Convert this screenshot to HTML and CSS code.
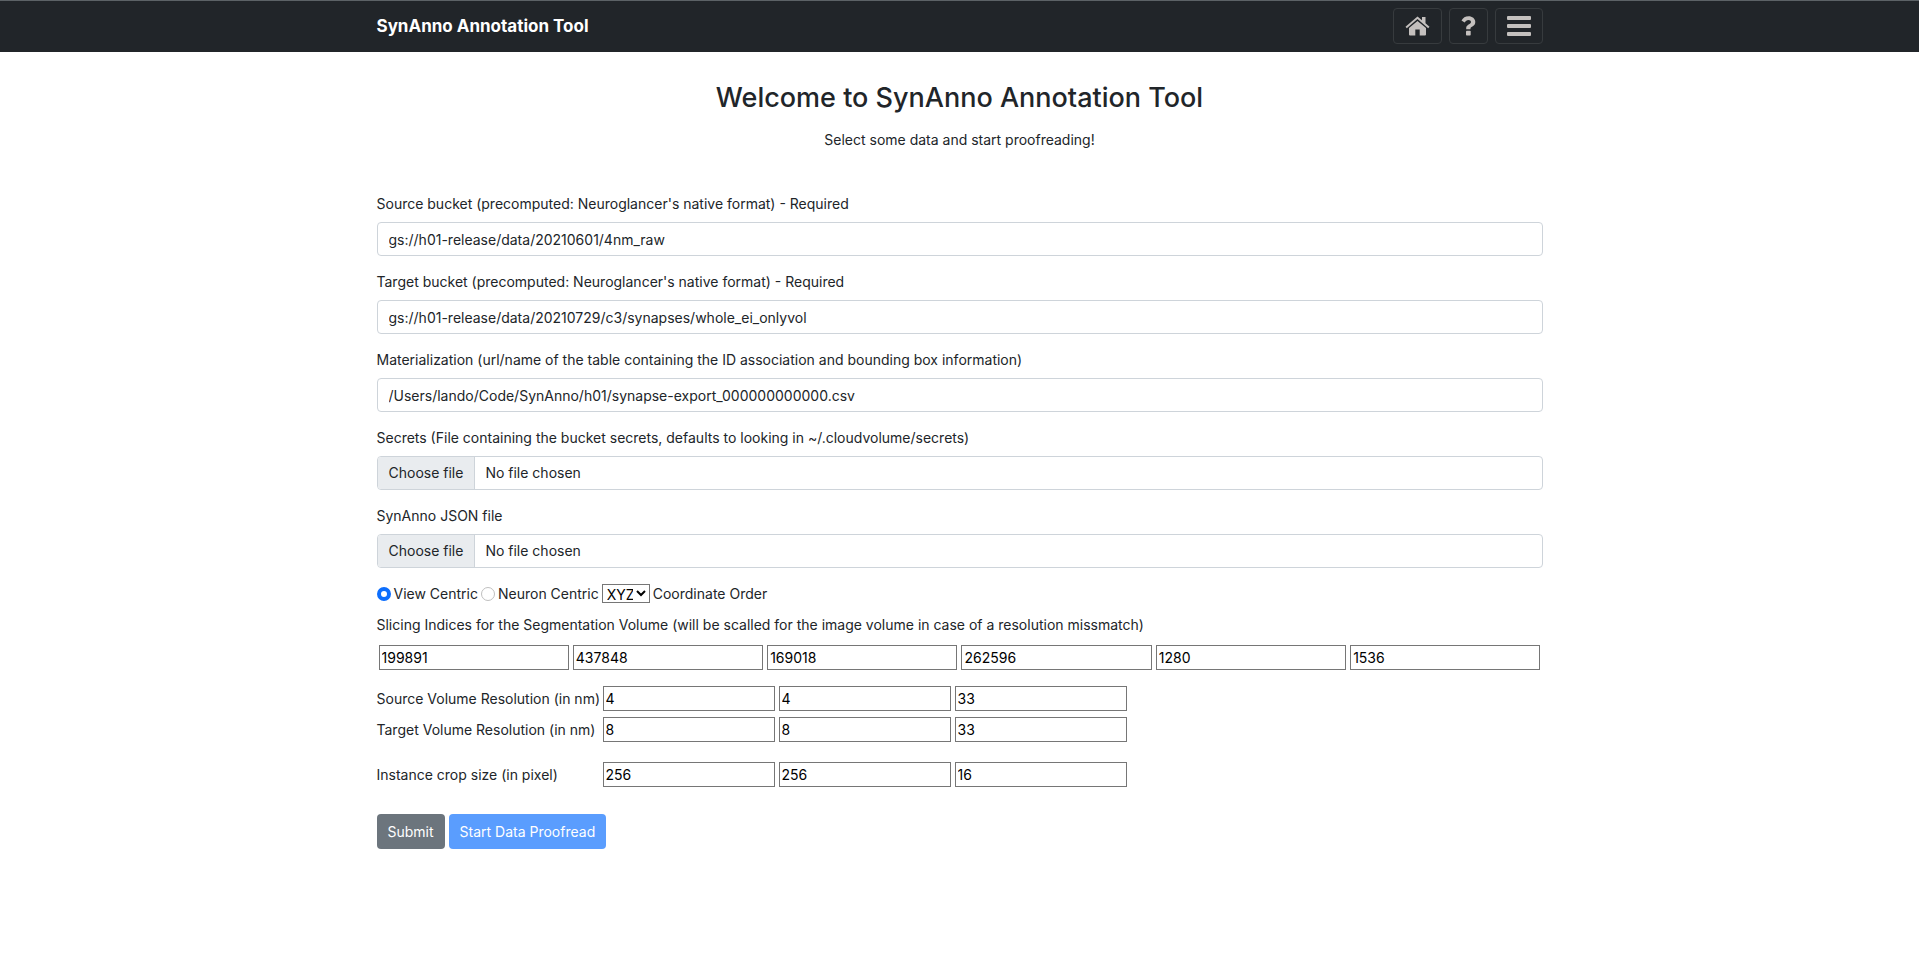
FILE: index.html
```html
<!DOCTYPE html>
<html lang="en">
<head>
<meta charset="utf-8">
<meta name="viewport" content="width=device-width, initial-scale=1">
<title>SynAnno Annotation Tool</title>
<link rel="stylesheet" href="styles.css">
</head>
<body>
<header class="navbar">
  <div class="container navbar-inner">
    <a class="brand" href="#">SynAnno Annotation Tool</a>
    <nav class="nav-buttons">
      <button class="nav-btn" type="button" aria-label="Home">
        <svg width="25" height="20" viewBox="0 0 25 20" fill="currentColor" aria-hidden="true">
          <path d="M12.500 0.500 L17 4.300 V1 H20.500 V7.300 L24.500 10.700 L23.200 12.200 L12.500 3.100 L1.800 12.200 L0.500 10.700 Z"/>
          <path d="M12.500 4.900 L21 12.100 V18.500 Q21 19.500 20 19.500 H14.700 V13.500 H10.300 V19.500 H5 Q4 19.500 4 18.500 V12.100 Z"/>
        </svg>
      </button>
      <button class="nav-btn" type="button" aria-label="Help">
        <svg width="15" height="20" viewBox="0 0 15 20" fill="currentColor" aria-hidden="true">
          <path d="M0.500 4.500 C2 1.700 4.300 0.200 7.600 0.200 C11.200 0.200 14.300 2.500 14.300 6 C14.300 10.500 9.500 10.600 9.500 12.300 V13.200 H5.200 V12 C5.200 8.300 10 8.200 10 5.900 C10 4.600 8.900 3.900 7.500 3.900 C5.700 3.900 4.800 4.900 3.600 6.500 Z"/>
          <rect x="5" y="14.700" width="4.700" height="4.800" rx="0.800"/>
        </svg>
      </button>
      <button class="nav-btn" type="button" aria-label="Menu">
        <svg width="24" height="20" viewBox="0 0 24 20" fill="currentColor" aria-hidden="true">
          <rect x="0" y="0" width="24" height="4" rx="1"/>
          <rect x="0" y="8" width="24" height="4" rx="1"/>
          <rect x="0" y="16" width="24" height="4" rx="1"/>
        </svg>
      </button>
    </nav>
  </div>
</header>
<main class="container">
  <h1 class="title">Welcome to SynAnno Annotation Tool</h1>
  <p class="lead">Select some data and start proofreading!</p>
  <form class="form">
    <div class="field">
      <label for="source">Source bucket (precomputed: Neuroglancer's native format) - Required</label>
      <input class="control" id="source" type="text" value="gs://h01-release/data/20210601/4nm_raw">
    </div>
    <div class="field">
      <label for="target">Target bucket (precomputed: Neuroglancer's native format) - Required</label>
      <input class="control" id="target" type="text" value="gs://h01-release/data/20210729/c3/synapses/whole_ei_onlyvol">
    </div>
    <div class="field">
      <label for="material">Materialization (url/name of the table containing the ID association and bounding box information)</label>
      <input class="control" id="material" type="text" value="/Users/lando/Code/SynAnno/h01/synapse-export_000000000000.csv">
    </div>
    <div class="field">
      <label for="secrets">Secrets (File containing the bucket secrets, defaults to looking in ~/.cloudvolume/secrets)</label>
      <div class="control file">
        <span class="file-button">Choose file</span>
        <span class="file-name">No file chosen</span>
        <input class="file-input" id="secrets" type="file">
      </div>
    </div>
    <div class="field">
      <label for="json">SynAnno JSON file</label>
      <div class="control file">
        <span class="file-button">Choose file</span>
        <span class="file-name">No file chosen</span>
        <input class="file-input" id="json" type="file">
      </div>
    </div>
    <div class="options">
      <input class="radio" id="view" type="radio" name="mode" checked>
      <label for="view">View Centric</label>
      <input class="radio" id="neuron" type="radio" name="mode">
      <label for="neuron">Neuron Centric</label>
      <select class="order" id="order"><option>XYZ</option><option>ZYX</option></select>
      <label for="order">Coordinate Order</label>
    </div>
    <p class="slice-label" id="slices">Slicing Indices for the Segmentation Volume (will be scalled for the image volume in case of a resolution missmatch)</p>
    <div class="slices" role="group" aria-labelledby="slices">
      <input class="num" type="text" aria-label="x1" value="199891">
      <input class="num" type="text" aria-label="x2" value="437848">
      <input class="num" type="text" aria-label="y1" value="169018">
      <input class="num" type="text" aria-label="y2" value="262596">
      <input class="num" type="text" aria-label="z1" value="1280">
      <input class="num" type="text" aria-label="z2" value="1536">
    </div>
    <div class="triple">
      <label for="src-x">Source Volume Resolution (in nm)</label>
      <input class="num" id="src-x" type="text" value="4">
      <input class="num" type="text" aria-label="Source y" value="4">
      <input class="num" type="text" aria-label="Source z" value="33">
    </div>
    <div class="triple">
      <label for="tgt-x">Target Volume Resolution (in nm)</label>
      <input class="num" id="tgt-x" type="text" value="8">
      <input class="num" type="text" aria-label="Target y" value="8">
      <input class="num" type="text" aria-label="Target z" value="33">
    </div>
    <div class="triple crop">
      <label for="crop-x">Instance crop size (in pixel)</label>
      <input class="num" id="crop-x" type="text" value="256">
      <input class="num" type="text" aria-label="Crop y" value="256">
      <input class="num" type="text" aria-label="Crop z" value="16">
    </div>
    <div class="actions">
      <button class="btn btn-submit" type="button">Submit</button>
      <button class="btn btn-start" type="button">Start Data Proofread</button>
    </div>
  </form>
</main>
</body>
</html>
```

FILE: styles.css
```css
* { box-sizing: border-box; }

body {
  margin: 0;
  background: #fff;
  color: #212529;
  font-family: Inter, "Liberation Sans", sans-serif;
  font-size: 14px;
  line-height: 21px;
}

input, select, button { font: inherit; margin: 0; }

.container {
  max-width: 1190px;
  margin: 0 auto;
  padding: 0 12px;
}

.navbar {
  background: #212529;
  border-top: 1px solid #5c6266;
  padding: 7px 0 8px;
}

.navbar-inner {
  display: flex;
  align-items: center;
  justify-content: space-between;
}

.brand {
  color: #fff;
  font-size: 17px;
  font-weight: 700;
  text-decoration: none;
}

.nav-buttons { display: flex; gap: 7px; }

.nav-btn {
  display: flex;
  align-items: center;
  height: 36px;
  padding: 0 11px;
  background: transparent;
  border: 1px solid #373b3e;
  border-radius: 4px;
  color: #c4c0be;
}

.title {
  margin: 28px 0 13px;
  font-size: 27px;
  font-weight: 500;
  line-height: 36px;
  text-align: center;
}

.lead { margin: 0 0 43px; text-align: center; }

.field { margin-bottom: 15px; }

.field label { display: block; margin-bottom: 8px; }

.control {
  display: block;
  width: 100%;
  height: 34px;
  padding: 0 11px;
  background: #fff;
  border: 1px solid #ced4da;
  border-radius: 4px;
  color: #212529;
}

.file {
  display: flex;
  position: relative;
  padding: 0;
  overflow: hidden;
  line-height: 32px;
}

.file-button {
  padding: 0 11px;
  background: #e9ecef;
  border-right: 1px solid #ced4da;
}

.file-name { padding-left: 10px; }

.file-input {
  position: absolute;
  inset: 0;
  width: 100%;
  opacity: 0;
}

.options { display: flex; align-items: center; gap: 3px; }

.radio {
  appearance: none;
  width: 14px;
  height: 14px;
  background: #fff;
  border: 1px solid #bfbfbf;
  border-radius: 50%;
}

.radio:checked { border: 4px solid #0d6efd; }

.order {
  width: 48px;
  height: 19px;
  padding: 0;
  background: #fff;
  border: 1px solid #767676;
  border-radius: 0;
  color: #000;
  line-height: 17px;
}

.slice-label { margin: 10px 0; }

.slices {
  display: grid;
  grid-template-columns: repeat(6, 1fr);
  gap: 4px;
  padding: 0 2px;
  margin-bottom: 16px;
}

.num {
  width: 100%;
  min-width: 0;
  height: 25px;
  padding: 0 2px;
  background: #fff;
  border: 1px solid #767676;
  border-radius: 0;
  color: #000;
}

.triple {
  display: grid;
  grid-template-columns: 222px repeat(3, 172px);
  column-gap: 4px;
  align-items: center;
  margin-bottom: 6px;
}

.triple label { white-space: nowrap; }

.crop { margin-top: 20px; }

.actions { display: flex; gap: 4px; margin-top: 27px; }

.btn {
  height: 35px;
  padding: 0 11px;
  border: 0;
  border-radius: 4px;
  color: #fff;
}

.btn-submit { background: #6c757d; }

.btn-start { background: #5a9dfe; }
```
